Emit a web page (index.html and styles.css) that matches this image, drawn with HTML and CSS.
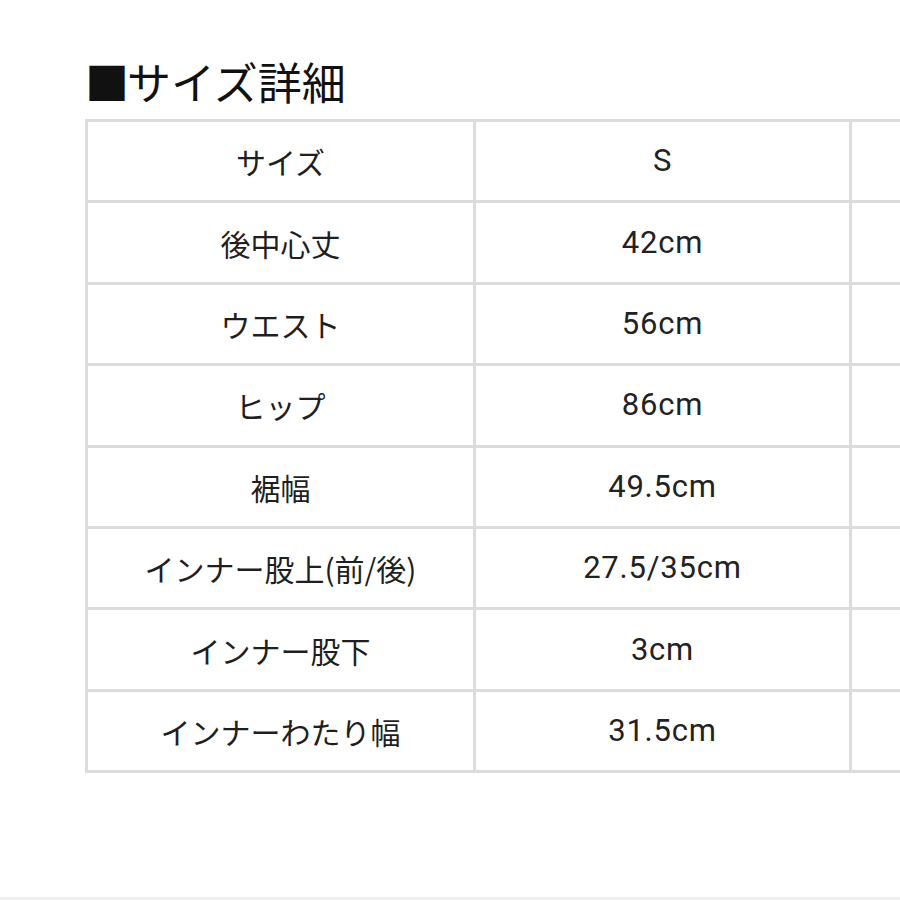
FILE: index.html
```html
<!DOCTYPE html>
<html lang="ja">
<head>
<meta charset="utf-8">
<link rel="stylesheet" href="styles.css">
</head>
<body>
<div class="page">
  <h1 class="title"><span class="mark">■</span>サイズ詳細</h1>
  <table class="size-table">
    <colgroup><col class="c1"><col class="c2"><col class="c3"></colgroup>
    <tr><td>サイズ</td><td class="num">S</td><td></td></tr>
    <tr><td>後中心丈</td><td class="num">42cm</td><td></td></tr>
    <tr><td>ウエスト</td><td class="num">56cm</td><td></td></tr>
    <tr><td>ヒップ</td><td class="num">86cm</td><td></td></tr>
    <tr><td>裾幅</td><td class="num">49.5cm</td><td></td></tr>
    <tr><td>インナー股上(前/後)</td><td class="num">27.5/35cm</td><td></td></tr>
    <tr><td>インナー股下</td><td class="num">3cm</td><td></td></tr>
    <tr><td>インナーわたり幅</td><td class="num">31.5cm</td><td></td></tr>
  </table>
  <div class="rule"></div>
</div>
</body>
</html>
```
FILE: styles.css
```css
html, body {
  margin: 0;
  padding: 0;
  background: #fff;
  overflow: hidden;
}
body {
  width: 900px;
  height: 900px;
  font-family: "Noto Sans CJK JP", "Noto Sans", sans-serif;
  color: #1a1a1a;
}
.page {
  position: relative;
  height: 900px;
  padding-left: 85px;
  padding-top: 56px;
  box-sizing: border-box;
}
.title {
  margin: 0;
  font-size: 44px;
  font-weight: 400;
  line-height: 50px;
  height: 63px;
  color: #111;
  white-space: nowrap;
}
.mark {
  display: inline-block;
  margin-left: 0;
  margin-right: -2px;
}
.size-table {
  border-collapse: collapse;
  table-layout: fixed;
  width: 1142px;
  border: 3px solid #dcdcdc;
}
.c1 { width: 388px; }
.c2 { width: 376px; }
.c3 { width: 376px; }
.size-table td {
  border: 3px solid #dcdcdc;
  height: 78.4px;
  padding: 0;
  text-align: center;
  vertical-align: middle;
  font-size: 30px;
  line-height: 30px;
  color: #1f1f1f;
  white-space: nowrap;
}
.jp {
  display: inline-block;
  transform: translateY(-2px);
}
.size-table td.num {
  font-family: Roboto, "Noto Sans CJK JP", sans-serif;
  font-size: 31px;
  line-height: 34px;
  letter-spacing: 0.8px;
  color: #222;
}
.rule {
  position: absolute;
  left: 0;
  right: 0;
  top: 897px;
  height: 3px;
  background: #efefef;
}
```
